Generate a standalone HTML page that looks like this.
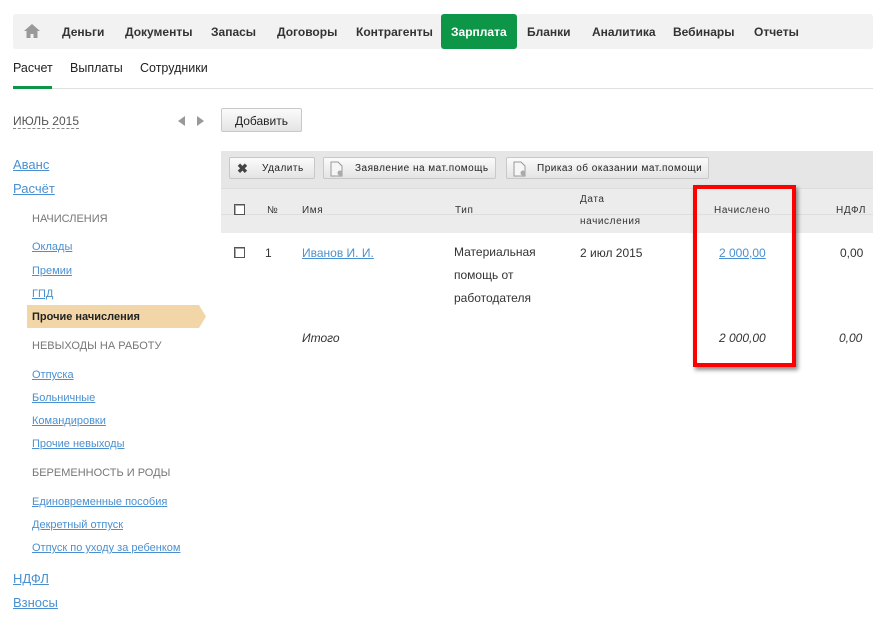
<!DOCTYPE html>
<html><head><meta charset="utf-8"><style>
*{margin:0;padding:0;box-sizing:border-box}
body{width:886px;height:629px;background:#fff;font-family:"Liberation Sans",sans-serif;position:relative;overflow:hidden;color:#333}
.a{position:absolute;white-space:nowrap}
.nav{left:13px;top:14px;width:860px;height:35px;background:#f2f2f2;border-radius:3px}
.ni{top:14px;height:35px;line-height:37px;font-weight:bold;font-size:12px;color:#333}
.td{font-size:12px;color:#333}
.lk{color:#4a90d0 !important;text-decoration:underline}
.sm{font-size:11px}
.big{font-size:13px}
.cap{font-size:11px;color:#777}
.btn{background:linear-gradient(#fbfbfb,#e4e4e4);border:1px solid #c8c8c8;border-radius:2px;font-size:10px;letter-spacing:0.5px;color:#222;height:22px;line-height:22px}
.cb{width:11px;height:11px;border:1px solid #555;background:#fff;box-shadow:inset 1px 1px 0 #aaa}
.th{font-size:10px;letter-spacing:0.6px;color:#333}
</style></head><body>
<div class="a nav"></div>
<svg class="a" style="left:23px;top:23px" width="18" height="16" viewBox="0 0 18 16"><path d="M9 1L1 8h2.5v7h4v-4h3v4h4V8H17z" fill="#999"/></svg>
<div class="a ni" style="left:62px">Деньги</div>
<div class="a ni" style="left:125px">Документы</div>
<div class="a ni" style="left:211px">Запасы</div>
<div class="a ni" style="left:277px">Договоры</div>
<div class="a ni" style="left:356px">Контрагенты</div>
<div class="a" style="left:441px;top:14px;width:76px;height:35px;background:#0d9648;border-radius:3px"></div>
<div class="a ni" style="left:451px;color:#fff">Зарплата</div>
<div class="a ni" style="left:527px">Бланки</div>
<div class="a ni" style="left:592px">Аналитика</div>
<div class="a ni" style="left:673px">Вебинары</div>
<div class="a ni" style="left:754px">Отчеты</div>

<div class="a" style="left:13px;top:61px;font-size:12.5px;color:#222">Расчет</div>
<div class="a" style="left:70px;top:61px;font-size:12.5px;color:#222">Выплаты</div>
<div class="a" style="left:140px;top:61px;font-size:12.5px;color:#222">Сотрудники</div>
<div class="a" style="left:13px;top:88px;width:860px;height:1px;background:#e0e0e0"></div>
<div class="a" style="left:13px;top:86px;width:39px;height:3px;background:#0d9648"></div>

<div class="a" style="left:13px;top:114px;font-size:12px;color:#555;border-bottom:1px dashed #888;line-height:14px">ИЮЛЬ 2015</div>
<svg class="a" style="left:178px;top:116px" width="26" height="10"><path d="M0 5L7 0V10Z M26 5L19 0V10Z" fill="#999"/></svg>
<div class="a btn" style="left:221px;top:108px;width:81px;height:24px;line-height:24px;font-size:12px;letter-spacing:0;text-align:center">Добавить</div>

<div class="a lk big" style="left:13px;top:157px">Аванс</div>
<div class="a lk big" style="left:13px;top:181px">Расчёт</div>
<div class="a cap" style="left:32px;top:213px">НАЧИСЛЕНИЯ</div>
<div class="a lk sm" style="left:32px;top:241px">Оклады</div>
<div class="a lk sm" style="left:32px;top:265px">Премии</div>
<div class="a lk sm" style="left:32px;top:288px">ГПД</div>
<svg class="a" style="left:27px;top:305px" width="180" height="23"><path d="M0 0H172L179 11.5L172 23H0Z" fill="#f2d6a8"/></svg>
<div class="a" style="left:32px;top:311px;font-size:11px;font-weight:bold;color:#222">Прочие начисления</div>
<div class="a cap" style="left:32px;top:340px">НЕВЫХОДЫ НА РАБОТУ</div>
<div class="a lk sm" style="left:32px;top:369px">Отпуска</div>
<div class="a lk sm" style="left:32px;top:392px">Больничные</div>
<div class="a lk sm" style="left:32px;top:415px">Командировки</div>
<div class="a lk sm" style="left:32px;top:438px">Прочие невыходы</div>
<div class="a cap" style="left:32px;top:467px">БЕРЕМЕННОСТЬ И РОДЫ</div>
<div class="a lk sm" style="left:32px;top:496px">Единовременные пособия</div>
<div class="a lk sm" style="left:32px;top:519px">Декретный отпуск</div>
<div class="a lk sm" style="left:32px;top:542px">Отпуск по уходу за ребенком</div>
<div class="a lk big" style="left:13px;top:571px">НДФЛ</div>
<div class="a lk big" style="left:13px;top:595px">Взносы</div>

<div class="a" style="left:221px;top:151px;width:652px;height:37px;background:#e6e6e6"></div>
<div class="a" style="left:221px;top:188px;width:652px;height:45px;background:#ececec;border-top:1px solid #dcdcdc"></div>
<div class="a" style="left:221px;top:214px;width:652px;height:1px;background:#dedede"></div>
<div class="a btn" style="left:229px;top:157px;width:86px"><span style="position:absolute;left:7px;top:0;font-size:13px;font-weight:bold;color:#444">✖</span><span style="position:absolute;left:32px">Удалить</span></div>
<div class="a btn" style="left:323px;top:157px;width:173px"><svg style="position:absolute;left:6px;top:3px" width="14" height="16"><path d="M1 1h7l4 4v10H1z" fill="#f6f6f6" stroke="#999"/><circle cx="10" cy="12" r="2.5" fill="#aaa"/></svg><span style="position:absolute;left:31px">Заявление на мат.помощь</span></div>
<div class="a btn" style="left:506px;top:157px;width:203px"><svg style="position:absolute;left:6px;top:3px" width="14" height="16"><path d="M1 1h7l4 4v10H1z" fill="#f6f6f6" stroke="#999"/><circle cx="10" cy="12" r="2.5" fill="#aaa"/></svg><span style="position:absolute;left:30px">Приказ об оказании мат.помощи</span></div>

<div class="a cb" style="left:234px;top:204px"></div>
<div class="a th" style="left:267px;top:205px">№</div>
<div class="a th" style="left:302px;top:205px">Имя</div>
<div class="a th" style="left:455px;top:205px">Тип</div>
<div class="a th" style="left:580px;top:194px">Дата</div>
<div class="a th" style="left:580px;top:216px">начисления</div>
<div class="a th" style="left:714px;top:205px">Начислено</div>
<div class="a th" style="left:836px;top:205px">НДФЛ</div>

<div class="a cb" style="left:234px;top:247px"></div>
<div class="a td" style="left:265px;top:246px">1</div>
<div class="a td lk" style="left:302px;top:246px">Иванов И. И.</div>
<div class="a td" style="left:454px;top:241px;line-height:23px;white-space:normal;width:110px">Материальная помощь от работодателя</div>
<div class="a td" style="left:580px;top:246px">2 июл 2015</div>
<div class="a td lk" style="left:719px;top:246px">2 000,00</div>
<div class="a td" style="left:840px;top:246px">0,00</div>
<div class="a td" style="left:302px;top:331px;font-style:italic">Итого</div>
<div class="a td" style="left:719px;top:331px;font-style:italic">2 000,00</div>
<div class="a td" style="left:839px;top:331px;font-style:italic">0,00</div>

<div class="a" style="left:693px;top:185px;width:103px;height:182px;border:4px solid #f00;box-shadow:2px 3px 4px rgba(0,0,0,.45)"></div>
</body></html>
